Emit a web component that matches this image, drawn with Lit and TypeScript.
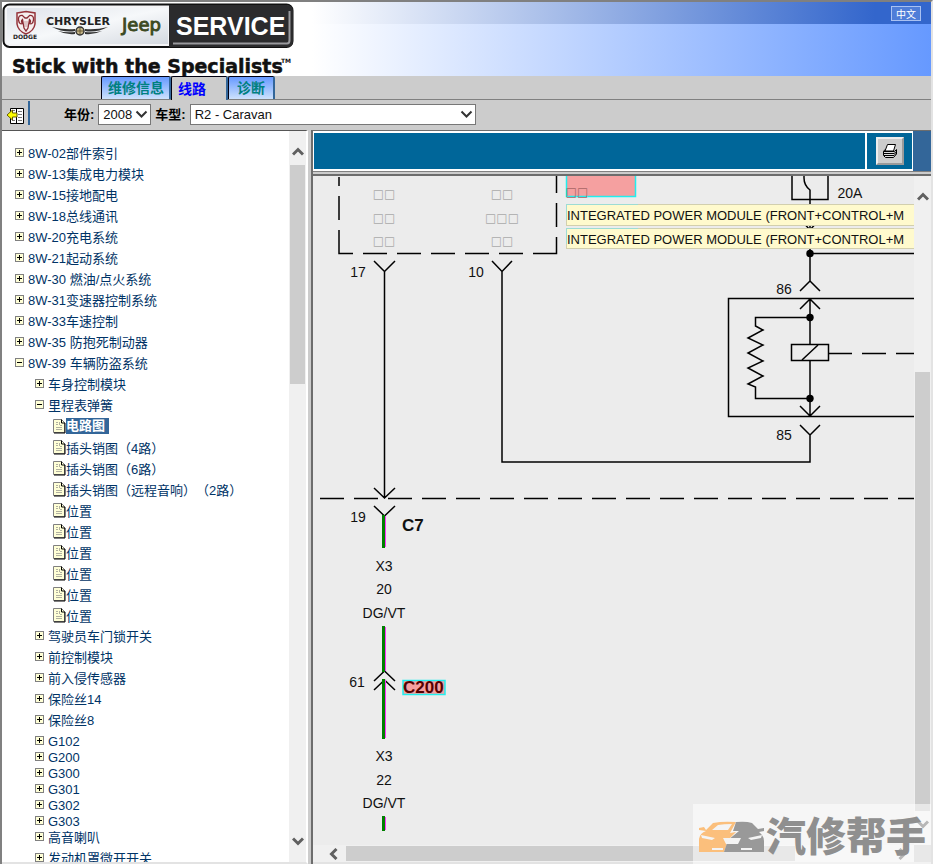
import { LitElement, html, svg, css, nothing } from "lit";
import { customElement, state, property } from "lit/decorators.js";
import { classMap } from "lit/directives/class-map.js";

interface TreeNode {
  label: string;
  open?: boolean;
  page?: boolean;
  current?: boolean;
  children?: TreeNode[];
}

const branch = (label: string): TreeNode => ({ label, children: [] });
const page = (label: string): TreeNode => ({ label, page: true });

const TREE: TreeNode[] = [
  branch("8W-02部件索引"),
  branch("8W-13集成电力模块"),
  branch("8W-15接地配电"),
  branch("8W-18总线通讯"),
  branch("8W-20充电系统"),
  branch("8W-21起动系统"),
  branch("8W-30 燃油/点火系统"),
  branch("8W-31变速器控制系统"),
  branch("8W-33车速控制"),
  branch("8W-35 防抱死制动器"),
  {
    label: "8W-39 车辆防盗系统",
    open: true,
    children: [
      branch("车身控制模块"),
      {
        label: "里程表弹簧",
        open: true,
        children: [
          { label: "电路图", page: true, current: true },
          page("插头销图（4路）"),
          page("插头销图（6路）"),
          page("插头销图（远程音响）（2路）"),
          page("位置"),
          page("位置"),
          page("位置"),
          page("位置"),
          page("位置"),
          page("位置"),
        ],
      },
      branch("驾驶员车门锁开关"),
      branch("前控制模块"),
      branch("前入侵传感器"),
      branch("保险丝14"),
      branch("保险丝8"),
      branch("G102"),
      branch("G200"),
      branch("G300"),
      branch("G301"),
      branch("G302"),
      branch("G303"),
      branch("高音喇叭"),
      branch("发动机罩微开开关"),
    ],
  },
];

@customElement("scroll-bar")
export class ScrollBar extends LitElement {
  @property({ reflect: true }) direction = "vertical";
  @property({ type: Number }) start = 0;
  @property({ type: Number }) size = 30;

  static styles = css`
    :host {
      display: flex;
      flex-direction: column;
      background: #f0f0f0;
    }
    :host([direction="horizontal"]) {
      flex-direction: row;
    }
    button {
      display: flex;
      align-items: center;
      justify-content: center;
      flex: none;
      width: 17px;
      height: 34px;
      padding: 8px 0 0;
      border: 0;
      background: none;
    }
    .end {
      padding: 0 0 8px;
    }
    :host([direction="horizontal"]) button {
      width: 33px;
      height: 17px;
      padding: 0 0 0 8px;
    }
    .arrow {
      fill: none;
      stroke: #606060;
      stroke-width: 3;
    }
    .track {
      flex: 1;
      display: flex;
      flex-direction: inherit;
      min-width: 0;
      min-height: 0;
    }
    .thumb {
      flex: none;
      margin: 0 1px;
      background: #cdcdcd;
    }
    :host([direction="horizontal"]) .thumb {
      margin: 1px 0;
    }
  `;

  render() {
    const vertical = this.direction === "vertical";
    const axis = vertical ? "height" : "width";
    return html`
      <button aria-label="后退">
        <svg width="12" height="12" viewBox="0 0 12 12">
          <path class="arrow" d=${vertical ? "M1 8.5 6 3.5 11 8.5" : "M8.5 1 3.5 6 8.5 11"} />
        </svg>
      </button>
      <div class="track">
        <div style="${axis}:${this.start}%"></div>
        <div class="thumb" style="${axis}:${this.size}%"></div>
      </div>
      <button class="end" aria-label="前进">
        <svg width="12" height="12" viewBox="0 0 12 12">
          <path class="arrow" d=${vertical ? "M1 3.5 6 8.5 11 3.5" : "M3.5 1 8.5 6 3.5 11"} />
        </svg>
      </button>
    `;
  }
}

@customElement("brand-banner")
export class BrandBanner extends LitElement {
  static styles = css`
    :host {
      display: block;
      height: 74px;
    }
    svg {
      display: block;
    }
    .service {
      font: bold 25px "Liberation Sans", Arial, sans-serif;
      fill: #fff;
    }
    .jeep {
      font: 18px "DejaVu Sans", sans-serif;
      fill: #3c4a22;
      stroke: #3c4a22;
    }
    .chrysler {
      font: bold 11px "DejaVu Sans", sans-serif;
      fill: #222;
    }
    .dodge {
      font: bold 6px "DejaVu Sans", sans-serif;
      fill: #222;
    }
    .slogan {
      font: bold 19px "DejaVu Sans", sans-serif;
      fill: #111;
      stroke: #111;
    }
    .mark {
      font: bold 6px "DejaVu Sans", sans-serif;
      fill: #111;
    }
  `;

  render() {
    return html`
      <svg width="300" height="74" viewBox="2 2 300 74" role="img" aria-label="Chrysler Service">
        <defs>
          <linearGradient id="plate" x1="0" x2="1" y1="0" y2="1">
            <stop offset="0" stop-color="#dfe3ea" />
            <stop offset=".5" stop-color="#f6f8fa" />
            <stop offset="1" stop-color="#d4d9e0" />
          </linearGradient>
        </defs>
        <rect x="3.5" y="4.5" width="289" height="42.5" rx="6" fill="#f4f4f6" stroke="#111" stroke-width="2" />
        <rect x="7" y="8" width="161" height="36" fill="url(#plate)" />
        <path d="M169 5H287Q293 5 293 11V41Q293 47 287 47H169Z" fill="#2b2b2d" />
        <path d="M173 43.5H287Q289.500 43.500 289.500 40V11" fill="none" stroke="#9a9a9e" stroke-width="2" />
        <path d="M17 13 26 11.500 35 13V24Q34 31 26 34 18 31 17 24Z" fill="#f5eeee" stroke="#96343b" stroke-width="1.500" />
        <path d="M25 18 22.500 15.500Q18 15 18.500 20 19.500 25 22.500 23.500 20.500 21 22.500 19.500L24 28 26 31 28 28 29.500 19.500Q31.500 21 29.500 23.500 32.500 25 33.500 20 34 15 29.500 15.500L27 18Z" fill="#f5eeee" stroke="#8a2c34" stroke-width="1.300" />
        <path d="M25 21V27M27 21V27" stroke="#b8777c" stroke-width=".7" />
        <text class="dodge" x="13" y="39">DODGE</text>
        <text class="chrysler" x="46" y="25">CHRYSLER</text>
        <path d="M52 27Q64 30 75 29V31Q64 33 52 27ZM58 31Q66 33 75 32V34Q66 35 58 31ZM108 27Q96 30 85 29V31Q96 33 108 27ZM102 31Q94 33 85 32V34Q94 35 102 31Z" fill="#333" />
        <circle cx="80" cy="31" r="4" fill="#c8b98c" stroke="#333" stroke-width="1.500" />
        <path d="M77 31H83M80 28V34" stroke="#695a35" />
        <text class="jeep" x="122" y="31" stroke-width=".9">Jeep</text>
        <text class="service" x="176" y="35">SERVICE</text>
        <text class="slogan" x="12" y="73" stroke-width=".5">Stick with the Specialists</text>
        <text class="mark" x="281" y="63">TM</text>
      </svg>
    `;
  }
}

@customElement("nav-tree")
export class NavTree extends LitElement {
  @state() private nodes = TREE;

  static styles = css`
    :host {
      display: block;
      overflow: hidden;
      background: #fff;
      padding: 14px 0 0 11px;
      font: 13px/16px "Liberation Sans", "Noto Sans CJK SC", sans-serif;
      text-spacing-trim: space-all;
    }
    ul {
      margin: 0;
      padding: 0;
      list-style: none;
    }
    ul ul {
      padding-left: 20px;
    }
    .row {
      display: flex;
      align-items: flex-start;
      height: 21px;
      white-space: nowrap;
    }
    .short {
      height: 16px;
    }
    .row a {
      color: #036;
      text-decoration: none;
      line-height: 18px;
    }
    .leaf a {
      line-height: 19px;
    }
    button {
      display: flex;
      flex: none;
      width: 9px;
      height: 9px;
      margin: 3px 4px 0 2px;
      padding: 0;
      border: 0;
      background: none;
    }
    .doc {
      flex: none;
      margin: 1px 0 0;
    }
    .leaf .current {
      padding-right: 4px;
      background: #369;
      color: #fff;
      font-weight: bold;
      line-height: 16px;
    }
  `;

  private toggle(node: TreeNode) {
    node.open = !node.open;
    this.nodes = [...this.nodes];
  }

  private renderNode(node: TreeNode): unknown {
    const latin = /^[\w-]+$/.test(node.label);
    return html`
      <li>
        <div class=${classMap({ row: true, short: latin, leaf: !!node.page })}>
          ${node.page
            ? html`<svg class="doc" width="13" height="15" viewBox="0 0 13 15">
                <path d="M.5.5H8.500L11.500 3.500V13.500H.5Z" fill="#ffffd6" stroke="#808080" />
                <path d="M8.500.5V4H12V14H1" fill="none" stroke="#000" />
                <path d="M3 3.500H5M3 5.500H5M6.500 3V6M3 8.500H9M3 10.500H9M7 6.500H9" fill="none" stroke="#b0b0a0" />
              </svg>`
            : html`<button aria-label=${node.label} aria-expanded=${node.open ? "true" : "false"} @click=${() => this.toggle(node)}>
                <svg width="9" height="9" viewBox="0 0 9 9">
                  <rect x=".5" y=".5" width="8" height="8" fill="#ffffd6" stroke="#808080" />
                  <path d=${node.open ? "M2 4.500H7" : "M2 4.500H7M4.500 2V7"} stroke="#000" />
                </svg>
              </button>`}
          <a class=${classMap({ current: !!node.current })} href="#">${node.label}</a>
        </div>
        ${node.open && node.children?.length
          ? html`<ul>${node.children.map((c) => this.renderNode(c))}</ul>`
          : nothing}
      </li>
    `;
  }

  render() {
    return html`<ul>${this.nodes.map((n) => this.renderNode(n))}</ul>`;
  }
}

@customElement("wiring-diagram")
export class WiringDiagram extends LitElement {
  static styles = css`
    :host {
      display: block;
      overflow: hidden;
      background: #ececec;
    }
    svg {
      display: block;
    }
    .wire {
      fill: none;
      stroke: #000;
      stroke-width: 1.5;
    }
    .dash {
      stroke-dasharray: 24 10;
    }
    .green {
      stroke: #008000;
      stroke-width: 3;
    }
    .violet {
      stroke: #f3f;
      stroke-width: 1;
    }
    .hot {
      fill: #f5a0a0;
      stroke: #2ee;
      stroke-width: 1.5;
    }
    .note {
      fill: #fffacd;
      stroke: #d2cfae;
    }
    .edge {
      stroke: #9ddcd4;
    }
    text {
      font: 14px "Liberation Sans", Arial, sans-serif;
      fill: #111;
    }
    .mid {
      text-anchor: middle;
    }
    .caption {
      font-size: 13px;
    }
    .strong {
      font-size: 17px;
      font-weight: bold;
    }
    .splice {
      font-size: 17px;
      font-weight: bold;
      fill: #500;
    }
    .box {
      font: 12px "DejaVu Sans", sans-serif;
      fill: #aaa;
      text-anchor: middle;
    }
    .faded {
      fill: #a66;
    }
  `;

  render() {
    const boxes: [number, number, string][] = [
      [384, 198, "□□"], [384, 222, "□□"], [384, 245, "□□"],
      [502, 198, "□□"], [502, 222, "□□□"], [502, 245, "□□"],
    ];
    const pins: [number, number, string][] = [
      [358, 277, "17"], [476, 277, "10"], [784, 294, "86"], [784, 440, "85"],
      [358, 522, "19"], [357, 687, "61"], [850, 198, "20A"],
      [384, 571, "X3"], [384, 594, "20"], [384, 618, "DG/VT"],
      [384, 761, "X3"], [384, 785, "22"], [384, 808, "DG/VT"],
    ];
    const runs = [[515, 548], [626, 672], [679, 739], [816, 831]];
    return html`
      <svg width="700" height="669" viewBox="313 176 700 669" role="img" aria-label="电路图">
        <path class="wire" d="M339 177V186M339 196V220M339 230V253.500H353M363 253.500H387M397 253.500H421M431 253.500H455M465 253.500H489M499 253.500H523M533 253.500H556.500V237M556.500 227V203M556.500 193V176" />
        ${boxes.map(([x, y, t]) => svg`<text class="box" x=${x} y=${y}>${t}</text>`)}
        <path class="wire" d="M374 261 384.500 271.500 395 261M384.500 271V498M374 488 384.500 498 395 488" />
        <path class="wire" d="M492 261 502 271.500 512 261M502 271V462H810V435M800 425 810 435 820 425" />
        <path class="wire dash" d="M320 498.500H1000" />
        <path class="wire" d="M374 506 384.500 516 395 506M374 681 384.500 671 395 681M374 690 384.500 680 395 690" />
        ${runs.map(
          ([a, b]) => svg`<path class="green" d="M383.500 ${a}V${b}" /><path class="violet" d="M385.500 ${a + 1}V${b - 1}" />`
        )}
        <rect class="hot" x="566.500" y="160" width="69" height="36.500" />
        <text class="box faded" x="577" y="196">□□</text>
        <path class="wire" d="M792 170V199.500H828V170M804 170V178C804 184 806 187 810 190V281M800 219 810 230 820 219M810 253.500H1000M800 291 810 281 820 291" />
        <circle cx="810" cy="253.500" r="3.700" />
        <path class="wire" d="M1000 298.500H728.500V416.500H1000M800 309 810 299 820 309M810 299V344M810 360V416M800 406 810 416 820 406" />
        <path class="wire" d="M810 317.500H755.500V326L763 330 748 338 763 345 748 353 763 361 748 368 763 376 748 384 755.500 387V398.500H810" />
        <circle cx="810" cy="317.500" r="3.700" />
        <circle cx="810" cy="398.500" r="3.700" />
        <rect class="wire" x="791.500" y="344.500" width="37" height="16" />
        <path class="wire" d="M802 360 818 345" />
        <path class="wire dash" d="M828 353.500H1000" />
        <rect class="note" x="566.500" y="204.500" width="440" height="21" />
        <path class="edge" d="M566 204.500H638M566.500 204V220" />
        <text class="caption" x="567" y="220">INTEGRATED POWER MODULE (FRONT+CONTROL+M</text>
        <rect class="note" x="566.500" y="228.500" width="440" height="20" />
        <path class="edge" d="M566 228.500H638M566.500 228V244" />
        <text class="caption" x="567" y="244">INTEGRATED POWER MODULE (FRONT+CONTROL+M</text>
        ${pins.map(([x, y, t]) => svg`<text class="mid" x=${x} y=${y}>${t}</text>`)}
        <text class="strong" x="402" y="531">C7</text>
        <rect class="hot" x="403" y="680.500" width="42" height="14" />
        <text class="splice" x="403" y="693">C200</text>
      </svg>
    `;
  }
}

@customElement("app-root")
export class AppRoot extends LitElement {
  @state() private tab = 1;

  static styles = css`
    :host {
      display: flex;
      flex-direction: column;
      position: relative;
      box-sizing: border-box;
      height: 100vh;
      overflow: hidden;
      border: solid #808080;
      border-width: 2px 2px 0 2px;
      border-right-color: #e3e3e3;
      background: #ccc;
      font: 13px/16px "Liberation Sans", "Noto Sans CJK SC", sans-serif;
      color: #000;
    }
    .banner {
      display: flex;
      justify-content: space-between;
      align-items: flex-start;
      background:
        linear-gradient(90deg, #fff 310px, #36c 94%) 0 0 / 100% 22px no-repeat,
        linear-gradient(90deg, #fff 310px, #69f);
    }
    .language {
      width: 30px;
      height: 15px;
      margin: 4px 10px 0 0;
      padding: 0;
      border: 1px solid #a9c1f2;
      background: #4f7dd8;
      color: #fff;
      font: 10px/12px "Noto Sans CJK SC", sans-serif;
    }
    .tabs {
      display: flex;
      height: 23px;
      padding-left: 99px;
      border-bottom: 1px solid #808080;
    }
    .tab {
      height: 23px;
      padding: 0 5px 0 6px;
      border: solid #001;
      border-width: 1px 2px 0 1px;
      border-right-color: #369;
      border-radius: 2px 2px 0 0;
      background: linear-gradient(#69f, #cde2fc);
      color: #008080;
      font: bold 14px/22px "Liberation Sans", "Noto Sans CJK SC", sans-serif;
    }
    .tab:last-child {
      padding: 0 8px;
    }
    .tab.active {
      height: 24px;
      padding-right: 20px;
      background: #ccc;
      color: #00f;
    }
    .tools {
      display: flex;
      align-items: center;
      height: 30px;
      font-weight: bold;
    }
    .collapse {
      display: flex;
      align-items: flex-end;
      width: 28px;
      height: 24px;
      margin: 0 34px 4px 0;
      padding: 0 0 0 4px;
      border: 0;
      border-right: 2px solid #369;
      background: none;
    }
    .picker {
      display: grid;
      align-items: center;
      justify-items: end;
      margin: 0 4px 2px 4px;
    }
    .picker select,
    .picker svg {
      grid-area: 1 / 1;
    }
    .picker svg {
      margin-right: 3px;
      pointer-events: none;
    }
    select {
      appearance: none;
      width: 100%;
      height: 21px;
      padding: 0 4px;
      border: 1px solid #777;
      border-radius: 0;
      background: #fff;
      color: #111;
      font: 13px "Liberation Sans", Arial, sans-serif;
    }
    .year {
      width: 53px;
    }
    .model {
      width: 286px;
    }
    .frames {
      display: flex;
      gap: 3px;
      flex: 1;
      min-height: 0;
    }
    .side {
      display: flex;
      flex: none;
      box-sizing: border-box;
      width: 306px;
      border-top: 1px solid #555;
      border-right: 2px solid #fff;
      border-bottom: 2px solid #e3e3e3;
    }
    .side nav-tree {
      flex: 1;
      min-width: 0;
    }
    .main {
      display: flex;
      flex-direction: column;
      flex: 1;
      min-width: 0;
      border-left: 2px solid #6d6d6d;
      border-top: 1px solid #6d6d6d;
    }
    .title {
      display: flex;
      flex: none;
      height: 40px;
      border-bottom: 1px solid #808080;
      background: #369;
    }
    .title h2 {
      flex: 1;
      margin: 0;
      border: 1px solid #fff;
      border-width: 2px 1px;
      background: #069;
    }
    .action {
      display: flex;
      padding: 4px 8px 4px 9px;
      border: 1px solid #fff;
      border-width: 2px 1px;
      background: #069;
    }
    .action button {
      display: flex;
      align-items: center;
      justify-content: center;
      width: 28px;
      height: 28px;
      padding: 0;
      border: 2px outset #eee;
      background: #ccc;
    }
    .spare {
      width: 18px;
    }
    .view {
      display: flex;
      flex: 1;
      min-height: 0;
      margin-top: 2px;
      border-top: 2px solid #6d6d6d;
      border-bottom: 2px solid #e3e3e3;
    }
    .column {
      display: flex;
      flex-direction: column;
      flex: 1;
      min-width: 0;
    }
    .column wiring-diagram {
      flex: 1;
      min-height: 0;
    }
    .upright {
      width: 17px;
      margin-bottom: 17px;
    }
    .watermark {
      position: absolute;
      right: -2px;
      bottom: 0;
      display: flex;
      align-items: center;
      width: 240px;
      height: 60px;
      background: rgba(255, 255, 255, 0.55);
      color: #8f8f8f;
      font: 900 40px/60px "Noto Sans CJK SC", sans-serif;
      white-space: nowrap;
    }
    .watermark svg {
      flex: none;
      margin: 6px 1px 0 5px;
    }
  `;

  private picker(id: string, cls: string, options: string[]) {
    return html`
      <div class="picker ${cls}">
        <select id=${id}>${options.map((o) => html`<option>${o}</option>`)}</select>
        <svg width="13" height="9" viewBox="0 0 13 9">
          <path d="M1.500 1.500 6.500 6.500 11.500 1.500" fill="none" stroke="#333" stroke-width="2" />
        </svg>
      </div>
    `;
  }

  render() {
    return html`
      <header class="banner">
        <brand-banner></brand-banner>
        <button class="language">中文</button>
      </header>
      <nav class="tabs">
        ${["维修信息", "线路", "诊断"].map(
          (t, i) => html`<button class=${classMap({ tab: true, active: i === this.tab })} @click=${() => (this.tab = i)}>${t}</button>`
        )}
      </nav>
      <div class="tools">
        <button class="collapse" aria-label="隐藏目录">
          <svg width="19" height="18" viewBox="0 0 19 18">
            <path d="M4.500 1.500H17.500V16.500H4.500Z" fill="#fff" stroke="#000" />
            <path d="M10.500 2V16" stroke="#000" />
            <path d="M12 4.500H16M12 7.500H16M12 10.500H16M12 13.500H16M6 13.500H9M6 3.500H9" stroke="#777" />
            <path d="M1 8 6.500 3V6H11V10H6.500V13Z" fill="#ff0" stroke="#665c00" />
          </svg>
        </button>
        <label for="year">年份:</label>
        ${this.picker("year", "year", ["2008"])}
        <label for="model">车型:</label>
        ${this.picker("model", "model", ["R2 - Caravan"])}
      </div>
      <div class="frames">
        <aside class="side">
          <nav-tree></nav-tree>
          <scroll-bar start="0" size="33"></scroll-bar>
        </aside>
        <main class="main">
          <div class="title">
            <h2></h2>
            <div class="action">
              <button aria-label="打印">
                <svg width="16" height="16" viewBox="0 0 16 16">
                  <path d="M5.500 1.500H13.500L11.500 8H3Z" fill="#fff" stroke="#000" />
                  <path d="M3 6.500 1.500 8.500V12.500L3.500 14.500H11.500L14.500 11V6.500L12.500 8.500H1.500M1.500 10.500H12L14.500 8.500M2 12.500H12L14.500 10" fill="#ddd" stroke="#000" />
                </svg>
              </button>
            </div>
            <div class="spare"></div>
          </div>
          <div class="view">
            <div class="column">
              <wiring-diagram></wiring-diagram>
              <scroll-bar direction="horizontal" start="0" size="84"></scroll-bar>
            </div>
            <scroll-bar class="upright" start="27" size="73"></scroll-bar>
          </div>
        </main>
      </div>
      <div class="watermark">
        <svg width="67" height="32" viewBox="0 0 67 32">
          <path d="M1 7 6 6 8 9 15 2Q25 0 38 1L32 12 38 11 30 19 26 31H1V18Q2 12 8 10L1 9Z" fill="#fbbf7c" />
          <path d="M38 1Q48 0 54 2L60 8 66 7V10L61 11Q66 15 66 20V31H26L30 19 41 10 35 10Z" fill="#999" />
          <path d="M14 9 20 4Q26 3 34 3L30 9ZM3 14 17 17 14 19 4 17ZM64 14 50 17 53 19 63 17ZM25 17H43L40 23H28ZM14 27H25V29H14ZM43 27H54V29H43Z" fill="#f4f4f4" />
        </svg>
        汽修帮手
      </div>
    `;
  }
}
